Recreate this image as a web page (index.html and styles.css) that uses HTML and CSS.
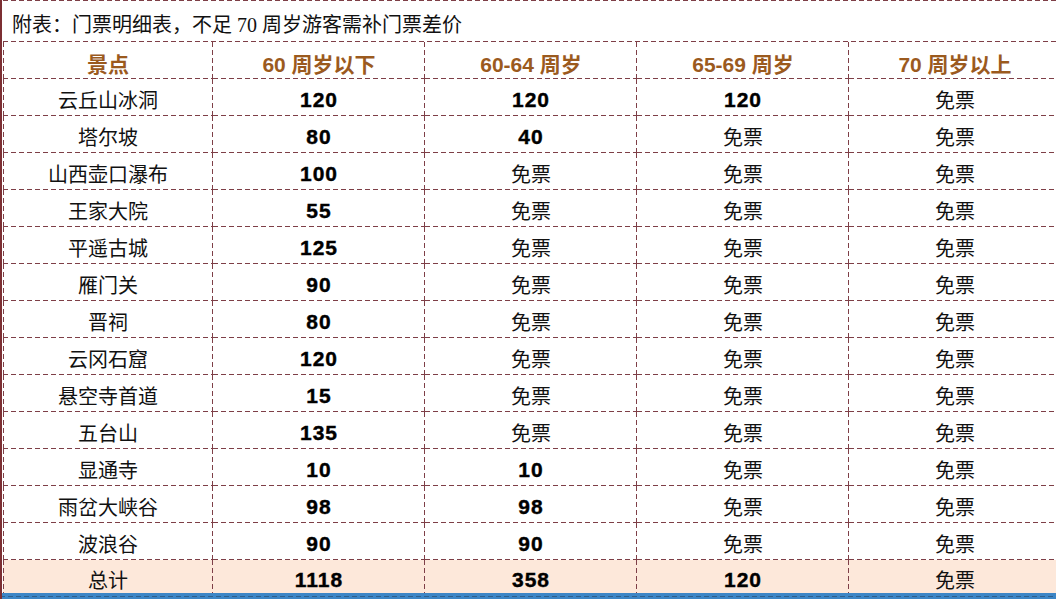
FILE: index.html
```html
<!DOCTYPE html>
<html lang="zh-CN">
<head>
<meta charset="utf-8">
<title>门票明细表</title>
<link rel="stylesheet" href="styles.css">
</head>
<body>
<div class="page">
  <div class="sheet">
    <div class="title">附表：门票明细表，不足 70 周岁游客需补门票差价</div>

    <div class="cell head c1">景点</div>
    <div class="cell head">60 周岁以下</div>
    <div class="cell head">60-64 周岁</div>
    <div class="cell head">65-69 周岁</div>
    <div class="cell head last">70 周岁以上</div>

    <div class="cell name c1">云丘山冰洞</div><div class="cell num">120</div><div class="cell num">120</div><div class="cell num">120</div><div class="cell free last">免票</div>
    <div class="cell name c1">塔尔坡</div><div class="cell num">80</div><div class="cell num">40</div><div class="cell free">免票</div><div class="cell free last">免票</div>
    <div class="cell name c1">山西壶口瀑布</div><div class="cell num">100</div><div class="cell free">免票</div><div class="cell free">免票</div><div class="cell free last">免票</div>
    <div class="cell name c1">王家大院</div><div class="cell num">55</div><div class="cell free">免票</div><div class="cell free">免票</div><div class="cell free last">免票</div>
    <div class="cell name c1">平遥古城</div><div class="cell num">125</div><div class="cell free">免票</div><div class="cell free">免票</div><div class="cell free last">免票</div>
    <div class="cell name c1">雁门关</div><div class="cell num">90</div><div class="cell free">免票</div><div class="cell free">免票</div><div class="cell free last">免票</div>
    <div class="cell name c1">晋祠</div><div class="cell num">80</div><div class="cell free">免票</div><div class="cell free">免票</div><div class="cell free last">免票</div>
    <div class="cell name c1">云冈石窟</div><div class="cell num">120</div><div class="cell free">免票</div><div class="cell free">免票</div><div class="cell free last">免票</div>
    <div class="cell name c1">悬空寺首道</div><div class="cell num">15</div><div class="cell free">免票</div><div class="cell free">免票</div><div class="cell free last">免票</div>
    <div class="cell name c1">五台山</div><div class="cell num">135</div><div class="cell free">免票</div><div class="cell free">免票</div><div class="cell free last">免票</div>
    <div class="cell name c1">显通寺</div><div class="cell num">10</div><div class="cell num">10</div><div class="cell free">免票</div><div class="cell free last">免票</div>
    <div class="cell name c1">雨岔大峡谷</div><div class="cell num">98</div><div class="cell num">98</div><div class="cell free">免票</div><div class="cell free last">免票</div>
    <div class="cell name c1">波浪谷</div><div class="cell num">90</div><div class="cell num">90</div><div class="cell free">免票</div><div class="cell free last">免票</div>

    <div class="cell total name c1">总计</div><div class="cell total num">1118</div><div class="cell total num">358</div><div class="cell total num">120</div><div class="cell total free last">免票</div>
  </div>
  <div class="footer"></div>
</div>
</body>
</html>
```

FILE: styles.css
```css
html, body {
  margin: 0;
  padding: 0;
  background: #ffffff;
  overflow: hidden;
}

.page {
  width: 1056px;
  height: 599px;
  overflow: hidden;
  border-left: 2px solid #7c2f33;
  box-sizing: border-box;
  padding-left: 1px;
}

.sheet {
  --line: #7e3f47;
  display: grid;
  grid-template-columns: 210px 212px 212px 212px 212px;
  font-family: "Liberation Sans", "Noto Sans CJK SC", sans-serif;
  color: #000000;
}

.title {
  grid-column: 1 / -1;
  height: 42px;
  box-sizing: border-box;
  padding: 4px 0 0 9px;
  display: flex;
  align-items: center;
  font-family: "Liberation Serif", "Noto Sans CJK SC", serif;
  font-size: 20px;
  color: #111111;
  background-image:
    linear-gradient(to right, var(--line) 5px, transparent 5px),
    linear-gradient(to right, var(--line) 5px, transparent 5px);
  background-size: 8px 1px, 8px 1px;
  background-repeat: repeat-x, repeat-x;
  background-position: left top, left bottom;
}

.cell {
  height: 37px;
  box-sizing: border-box;
  padding-top: 4px;
  display: flex;
  align-items: center;
  justify-content: center;
  white-space: nowrap;
  background-image:
    linear-gradient(to right, var(--line) 5px, transparent 5px),
    linear-gradient(to bottom, var(--line) 5px, transparent 5px);
  background-size: 8px 1px, 1px 8px;
  background-repeat: repeat-x, repeat-y;
  background-position: left bottom, right top;
}

.cell.c1 {
  background-image:
    linear-gradient(to right, var(--line) 5px, transparent 5px),
    linear-gradient(to bottom, var(--line) 5px, transparent 5px),
    linear-gradient(to bottom, var(--line) 5px, transparent 5px);
  background-size: 8px 1px, 1px 8px, 1px 8px;
  background-repeat: repeat-x, repeat-y, repeat-y;
  background-position: left bottom, right top, left top;
}

.cell.last {
  background-image: linear-gradient(to right, var(--line) 5px, transparent 5px);
  background-size: 8px 1px;
  background-repeat: repeat-x;
  background-position: left bottom;
}

.head {
  font-size: 21px;
  font-weight: bold;
  color: #9b5a1e;
}

.name,
.free {
  font-size: 20px;
  color: #111111;
}

.num {
  font-size: 21px;
  font-weight: bold;
  letter-spacing: 1px;
  -webkit-text-stroke: 0.4px #000000;
}

.total {
  height: 33px;
  padding-top: 6px;
  background-color: #fde8da;
  background-image: linear-gradient(to bottom, var(--line) 5px, transparent 5px);
  background-size: 1px 8px;
  background-repeat: repeat-y;
  background-position: right top;
}

.total.c1 {
  background-image:
    linear-gradient(to bottom, var(--line) 5px, transparent 5px),
    linear-gradient(to bottom, var(--line) 5px, transparent 5px);
  background-size: 1px 8px, 1px 8px;
  background-repeat: repeat-y, repeat-y;
  background-position: right top, left top;
}

.total.last {
  background-image: none;
}

.footer {
  height: 8px;
  margin-left: -3px;
  background-color: #3d86c6;
  background-image: linear-gradient(to right, #2f5f8c 5px, transparent 5px);
  background-size: 8px 1px;
  background-repeat: repeat-x;
  background-position: 0 3px;
}
```
